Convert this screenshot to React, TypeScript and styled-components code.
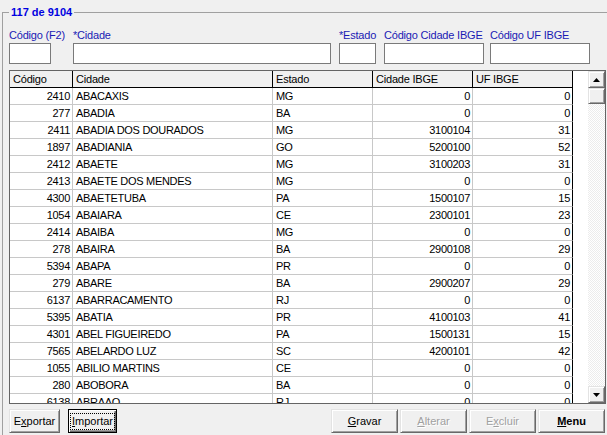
import React from "react";
import styled, { createGlobalStyle, css } from "styled-components";

const GlobalStyle = createGlobalStyle`
  html, body {
    margin: 0;
    padding: 0;
    background: #f0f0f0;
  }
  body {
    font-family: "Liberation Sans", Arial, sans-serif;
    font-size: 11px;
    color: #000;
  }
`;

type City = [number, string, string, number, number];

const cities: City[] = [
  [2410, "ABACAXIS", "MG", 0, 0],
  [277, "ABADIA", "BA", 0, 0],
  [2411, "ABADIA DOS DOURADOS", "MG", 3100104, 31],
  [1897, "ABADIANIA", "GO", 5200100, 52],
  [2412, "ABAETE", "MG", 3100203, 31],
  [2413, "ABAETE DOS MENDES", "MG", 0, 0],
  [4300, "ABAETETUBA", "PA", 1500107, 15],
  [1054, "ABAIARA", "CE", 2300101, 23],
  [2414, "ABAIBA", "MG", 0, 0],
  [278, "ABAIRA", "BA", 2900108, 29],
  [5394, "ABAPA", "PR", 0, 0],
  [279, "ABARE", "BA", 2900207, 29],
  [6137, "ABARRACAMENTO", "RJ", 0, 0],
  [5395, "ABATIA", "PR", 4100103, 41],
  [4301, "ABEL FIGUEIREDO", "PA", 1500131, 15],
  [7565, "ABELARDO LUZ", "SC", 4200101, 42],
  [1055, "ABILIO MARTINS", "CE", 0, 0],
  [280, "ABOBORA", "BA", 0, 0],
  [6138, "ABRAAO", "RJ", 0, 0],
];

const Screen = styled.div`
  width: 607px;
  height: 435px;
  overflow: hidden;
  box-sizing: border-box;
  padding: 5px 0 0 2px;
  background: #f0f0f0;
`;

const Group = styled.fieldset`
  margin: 0;
  padding: 10px 0 0 6px;
  width: 640px;
  min-height: 470px;
  box-sizing: border-box;
  border: 1px solid #a0a0a0;
`;

const Legend = styled.legend`
  padding: 0 2px;
  font-weight: bold;
  font-size: 11px;
  line-height: 14px;
  color: #0000e0;
`;

const Filters = styled.div`
  display: flex;
  align-items: flex-end;
`;

const Field = styled.div<{ $w: number; $mr: number }>`
  display: flex;
  flex-direction: column;
  width: ${(p) => p.$w}px;
  margin-right: ${(p) => p.$mr}px;
`;

const Label = styled.label`
  color: #1a1ab4;
  line-height: 13px;
  letter-spacing: -0.2px;
  white-space: nowrap;
  margin-bottom: 1px;
`;

const Input = styled.input`
  height: 21px;
  box-sizing: border-box;
  border: 1px solid #7a7a7a;
  background: #fff;
  padding: 0 2px;
  font: inherit;
  outline: none;
`;

const Grid = styled.div`
  margin-top: 6px;
  width: 597px;
  height: 334px;
  box-sizing: border-box;
  border: 1px solid #646464;
  background: #fff;
  display: flex;
`;

const TableArea = styled.div`
  flex: 1;
  overflow: hidden;
`;

const Row = styled.div`
  display: grid;
  grid-template-columns: 63px 200px 100px 100px 100px;
  width: 563px;
`;

const HeadCell = styled.div`
  height: 17px;
  box-sizing: border-box;
  border-right: 1px solid #000;
  border-bottom: 1px solid #000;
  background: #f0f0f0;
  padding: 0 3px;
  line-height: 16px;
  letter-spacing: -0.2px;
  white-space: nowrap;
`;

const Cell = styled.div<{ $right?: boolean; $last?: boolean }>`
  height: 17px;
  box-sizing: border-box;
  border-right: 1px solid ${(p) => (p.$last ? "#000" : "#c8c8c8")};
  border-bottom: 1px solid #c8c8c8;
  padding: 0 2px 0 3px;
  line-height: 16px;
  letter-spacing: -0.3px;
  white-space: nowrap;
  overflow: hidden;
  text-align: ${(p) => (p.$right ? "right" : "left")};
`;

const raised = css`
  background: #f0f0f0;
  border: 1px solid;
  border-color: #e3e3e3 #696969 #696969 #e3e3e3;
  box-shadow: inset 1px 1px #fff, inset -1px -1px #a0a0a0;
`;

const ScrollBar = styled.div`
  width: 17px;
  display: flex;
  flex-direction: column;
`;

const ScrollButton = styled.div`
  ${raised}
  height: 17px;
  box-sizing: border-box;
  display: flex;
  align-items: center;
  justify-content: center;
`;

const Thumb = styled.div`
  ${raised}
  height: 16px;
  box-sizing: border-box;
`;

const Track = styled.div`
  flex: 1;
  background: repeating-conic-gradient(#fff 0 25%, #ececec 0 50%) 0 0 / 2px 2px;
`;

const Footer = styled.div`
  display: flex;
  margin-top: 5px;
  width: 596px;
`;

const ButtonGroup = styled.div<{ $gap: number }>`
  display: flex;
  gap: ${(p) => p.$gap}px;
`;

const Spacer = styled.div`
  flex: 1;
`;

const Button = styled.button<{ $w: number; $bold?: boolean; $default?: boolean }>`
  ${raised}
  width: ${(p) => p.$w}px;
  height: 24px;
  padding: 0;
  font-family: "Liberation Sans", Arial, sans-serif;
  font-size: 11px;
  font-weight: ${(p) => (p.$bold ? "bold" : "normal")};
  color: #000;
  display: flex;
  align-items: center;
  justify-content: center;
  ${(p) =>
    p.$default &&
    css`
      border-color: #000;
      box-shadow: inset 1px 1px #fff, inset -1px -1px #696969, inset -2px -2px #a0a0a0;
    `}
  &:disabled {
    color: #a0a0a0;
    text-shadow: 1px 1px #fff;
  }
`;

const Focus = styled.span`
  border: 1px dotted #000;
  padding: 1px 1px;
  line-height: 13px;
`;

const Arrow = ({ down }: { down?: boolean }) => (
  <svg width="7" height="4" viewBox="0 0 7 4">
    <polygon points={down ? "0,0 7,0 3.5,4" : "3.5,0 7,4 0,4"} fill="#000" />
  </svg>
);

const App = () => {
  return (
    <Screen>
      <GlobalStyle />
      <Group>
        <Legend>117 de 9104</Legend>
        <Filters>
          <Field $w={42} $mr={22}>
            <Label>Código (F2)</Label>
            <Input />
          </Field>
          <Field $w={258} $mr={8}>
            <Label>*Cidade</Label>
            <Input />
          </Field>
          <Field $w={37} $mr={8}>
            <Label>*Estado</Label>
            <Input />
          </Field>
          <Field $w={100} $mr={6}>
            <Label>Código Cidade IBGE</Label>
            <Input />
          </Field>
          <Field $w={100} $mr={0}>
            <Label>Código UF IBGE</Label>
            <Input />
          </Field>
        </Filters>

        <Grid>
          <TableArea>
            <Row>
              <HeadCell>Código</HeadCell>
              <HeadCell>Cidade</HeadCell>
              <HeadCell>Estado</HeadCell>
              <HeadCell>Cidade IBGE</HeadCell>
              <HeadCell>UF IBGE</HeadCell>
            </Row>
            {cities.map(([code, name, uf, ibge, ufIbge]) => (
              <Row key={code}>
                <Cell $right>{code}</Cell>
                <Cell>{name}</Cell>
                <Cell>{uf}</Cell>
                <Cell $right>{ibge}</Cell>
                <Cell $right $last>
                  {ufIbge}
                </Cell>
              </Row>
            ))}
          </TableArea>
          <ScrollBar>
            <ScrollButton>
              <Arrow />
            </ScrollButton>
            <Thumb />
            <Track />
            <ScrollButton>
              <Arrow down />
            </ScrollButton>
          </ScrollBar>
        </Grid>

        <Footer>
          <ButtonGroup $gap={8}>
            <Button $w={51}>
              <span>
                E<u>x</u>portar
              </span>
            </Button>
            <Button $w={49} $default>
              <Focus>
                <u>I</u>mportar
              </Focus>
            </Button>
          </ButtonGroup>
          <Spacer />
          <ButtonGroup $gap={2}>
            <Button $w={67}>
              <span>
                <u>G</u>ravar
              </span>
            </Button>
            <Button $w={67} disabled>
              <span>
                <u>A</u>lterar
              </span>
            </Button>
            <Button $w={67} disabled>
              <span>
                E<u>x</u>cluir
              </span>
            </Button>
            <Button $w={67} $bold>
              <span>
                <u>M</u>enu
              </span>
            </Button>
          </ButtonGroup>
        </Footer>
      </Group>
    </Screen>
  );
};

export default App;
